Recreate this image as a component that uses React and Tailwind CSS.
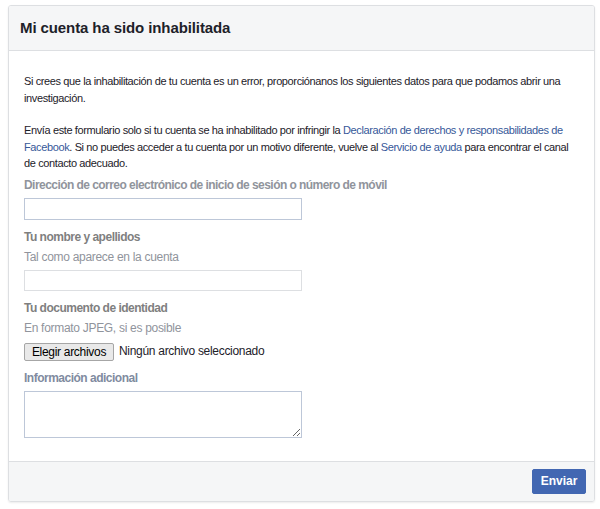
import React from 'react';

const App = () => {
    return (
        <div className="min-h-[509px] bg-white pt-[5px] px-[8px] font-['Liberation_Sans',Arial,sans-serif]">
            <div className="w-[587px] border border-[#dddfe2] rounded-[3px] shadow-[0_1px_2px_rgba(0,0,0,0.08)] overflow-hidden">
                {/* Header */}
                <div className="h-[45px] bg-[#f5f6f7] border-b border-[#dddfe2] flex items-center px-[11px]">
                    <h1 className="text-[15px] font-bold text-[#1d2129] tracking-[-0.1px]">Mi cuenta ha sido inhabilitada</h1>
                </div>

                {/* Body */}
                <div className="px-[15px] pt-[22px] pb-[23px] text-[11px] leading-[16.5px] tracking-[-0.38px] text-[#1d2129]">
                    <p>
                        Si crees que la inhabilitación de tu cuenta es un error, proporciónanos los siguientes datos para que podamos abrir una investigación.
                    </p>
                    <p className="mt-[16px]">
                        Envía este formulario solo si tu cuenta se ha inhabilitado por infringir la{' '}
                        <span className="text-[#365899]">Declaración de derechos y responsabilidades de Facebook</span>. Si no puedes acceder a tu cuenta por un motivo diferente, vuelve al{' '}
                        <span className="text-[#365899]">Servicio de ayuda</span> para encontrar el canal de contacto adecuado.
                    </p>

                    <label className="block mt-[3px] text-[12px] font-bold text-[#90949c] leading-[20px] tracking-[-0.55px]">
                        Dirección de correo electrónico de inicio de sesión o número de móvil
                    </label>
                    <input type="text" className="mt-[3px] block w-[278px] h-[22px] border border-[#bdc7d8] bg-white outline-none" />

                    <div className="mt-[7px] text-[12px] font-bold text-[#7f7f7f] leading-[20px] tracking-[-0.5px]">Tu nombre y apellidos</div>
                    <div className="text-[12px] text-[#90949c] leading-[20px] tracking-[-0.3px]">Tal como aparece en la cuenta</div>
                    <input type="text" className="mt-[3px] block w-[278px] h-[21px] border border-[#dddfe2] bg-white outline-none" />

                    <div className="mt-[7px] text-[12px] font-bold text-[#7f7f7f] leading-[20px] tracking-[-0.5px]">Tu documento de identidad</div>
                    <div className="text-[12px] text-[#90949c] leading-[20px] tracking-[-0.3px]">En formato JPEG, si es posible</div>
                    <div className="mt-[5px] flex items-center gap-[5px] text-[12px] text-[#1d2129] tracking-[-0.3px]">
                        <button className="h-[18px] w-[90px] bg-[#e9e9e9] border border-[#a6a6a6] rounded-[2px] text-[12px] text-black tracking-[-0.3px]">
                            Elegir archivos
                        </button>
                        <span>Ningún archivo seleccionado</span>
                    </div>

                    <div className="mt-[7px] text-[12px] font-bold text-[#7f8ba0] leading-[20px] tracking-[-0.5px]">Información adicional</div>
                    <textarea className="mt-[3px] block w-[278px] h-[47px] border border-[#bdc7d8] bg-white outline-none resize-y" />
                </div>

                {/* Footer */}
                <div className="h-[40px] bg-[#f5f6f7] border-t border-[#dddfe2] flex items-center justify-end px-[8px]">
                    <button className="h-[25px] w-[54px] bg-[#4267b2] border border-[#4267b2] rounded-[2px] text-[12px] font-bold text-white">
                        Enviar
                    </button>
                </div>
            </div>
        </div>
    );
};

export default App;
